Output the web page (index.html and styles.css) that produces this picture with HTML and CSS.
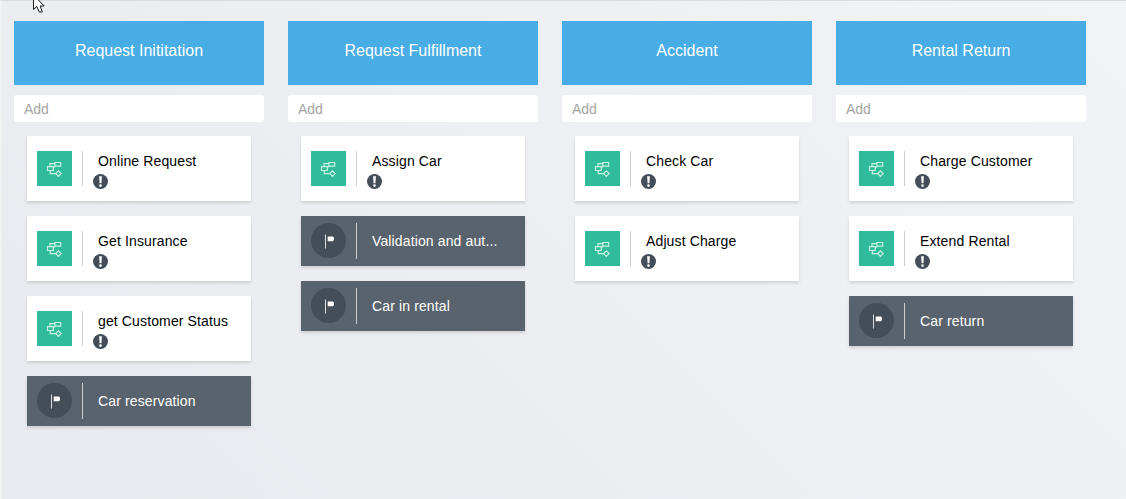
FILE: index.html
```html
<!DOCTYPE html>
<html lang="en">
<head>
<meta charset="utf-8">
<title>Case stages</title>
<link rel="stylesheet" href="styles.css">
</head>
<body>
<svg class="sprite" aria-hidden="true">
  <symbol id="flow" viewBox="0 0 35 35">
    <path d="M17.6 12.6H13V15.5M13.3 19.6V22.7H18.6M16.5 16.6L18 15.2M17.9 11.5H23.7V15.2H17.9ZM10.5 15.6H16.3V19.5H10.5ZM21.4 19.9L24.1 22.6L21.4 25.3L18.7 22.6Z" fill="none" stroke="#c9f2e5" stroke-width="1.2"/>
  </symbol>
  <symbol id="flag" viewBox="0 0 35 35">
    <circle cx="17.5" cy="17.5" r="17.5" fill="#434e59"/>
    <rect x="14" y="11.5" width="1" height="14" fill="#ddd"/>
    <path d="M16.7 13.5H22L23 14.5V16.8L22 18.3H16.7Z" fill="#fff"/>
  </symbol>
  <symbol id="alert" viewBox="0 0 15 15">
    <circle cx="7.5" cy="7.5" r="7.5" fill="#434e59"/>
    <path d="M6.1 2.2H8.9L8.4 9.3H6.6Z" fill="#fff"/>
    <circle cx="7.5" cy="11.6" r="1.3" fill="#fff"/>
  </symbol>
</svg>
<main class="board">
  <section class="stage">
    <h2 class="stage-title">Request Inititation</h2>
    <input class="add" placeholder="Add">
    <div class="cards">
      <div class="card"><svg class="icon task"><use href="#flow"/></svg><div class="body"><span class="name">Online Request</span><svg class="alert"><use href="#alert"/></svg></div></div>
      <div class="card"><svg class="icon task"><use href="#flow"/></svg><div class="body"><span class="name">Get Insurance</span><svg class="alert"><use href="#alert"/></svg></div></div>
      <div class="card"><svg class="icon task"><use href="#flow"/></svg><div class="body"><span class="name">get Customer Status</span><svg class="alert"><use href="#alert"/></svg></div></div>
      <div class="card milestone"><svg class="icon"><use href="#flag"/></svg><div class="body"><span class="name">Car reservation</span></div></div>
    </div>
  </section>
  <section class="stage">
    <h2 class="stage-title">Request Fulfillment</h2>
    <input class="add" placeholder="Add">
    <div class="cards">
      <div class="card"><svg class="icon task"><use href="#flow"/></svg><div class="body"><span class="name">Assign Car</span><svg class="alert"><use href="#alert"/></svg></div></div>
      <div class="card milestone"><svg class="icon"><use href="#flag"/></svg><div class="body"><span class="name">Validation and aut...</span></div></div>
      <div class="card milestone"><svg class="icon"><use href="#flag"/></svg><div class="body"><span class="name">Car in rental</span></div></div>
    </div>
  </section>
  <section class="stage">
    <h2 class="stage-title">Accident</h2>
    <input class="add" placeholder="Add">
    <div class="cards">
      <div class="card"><svg class="icon task"><use href="#flow"/></svg><div class="body"><span class="name">Check Car</span><svg class="alert"><use href="#alert"/></svg></div></div>
      <div class="card"><svg class="icon task"><use href="#flow"/></svg><div class="body"><span class="name">Adjust Charge</span><svg class="alert"><use href="#alert"/></svg></div></div>
    </div>
  </section>
  <section class="stage">
    <h2 class="stage-title">Rental Return</h2>
    <input class="add" placeholder="Add">
    <div class="cards">
      <div class="card"><svg class="icon task"><use href="#flow"/></svg><div class="body"><span class="name">Charge Customer</span><svg class="alert"><use href="#alert"/></svg></div></div>
      <div class="card"><svg class="icon task"><use href="#flow"/></svg><div class="body"><span class="name">Extend Rental</span><svg class="alert"><use href="#alert"/></svg></div></div>
      <div class="card milestone"><svg class="icon"><use href="#flag"/></svg><div class="body"><span class="name">Car return</span></div></div>
    </div>
  </section>
</main>
<svg class="cursor" viewBox="0 0 14 14"><path d="M.5 -5V9.5L3.8 6.5L6.3 12H9.3L7.2 6H11.2L.5 -5Z" fill="#fff" stroke="#15171f" stroke-width="1"/></svg>
</body>
</html>
```
FILE: styles.css
```css
* { box-sizing: border-box; }
body {
  margin: 0;
  height: 499px;
  overflow: hidden;
  font-family: "Liberation Sans", Arial, sans-serif;
  background: linear-gradient(45deg, #e9eaef, #f2f3f7);
  border-top: 1px solid #dadadc;
  border-left: 2px solid #f2f2f4;
}
.sprite { display: none; }
.board {
  display: flex;
  align-items: flex-start;
  gap: 24px;
  padding: 20px 0 0 12px;
}
.stage { flex: none; width: 250px; }
.stage-title {
  margin: 0;
  height: 64px;
  padding-top: 20px;
  background: #48ace5;
  color: #fff;
  font-size: 16px;
  font-weight: 400;
  line-height: 20px;
  text-align: center;
}
.add {
  display: block;
  width: 100%;
  height: 27px;
  margin: 10px 0 14px;
  padding: 1px 10px 0;
  border: 0;
  border-radius: 3px;
  background: #fff;
  font: 14px "Liberation Sans", Arial, sans-serif;
}
.add::placeholder { color: #a5a5a5; opacity: 1; }
.cards {
  display: flex;
  flex-direction: column;
  gap: 15px;
  padding: 0 13px;
}
.card {
  display: flex;
  align-items: center;
  height: 65px;
  padding-left: 10px;
  background: #fff;
  color: #000;
  box-shadow: 0 2px 3px rgba(0, 0, 0, .13);
}
.icon { width: 35px; height: 35px; flex: none; }
.task { background: #30bb9b; }
.body {
  height: 35px;
  margin-left: 10px;
  padding-left: 10px;
  border-left: 1px solid #ccc;
}
.name {
  display: block;
  padding-left: 5px;
  font-size: 14px;
  letter-spacing: .13px;
  line-height: 20px;
  white-space: nowrap;
}
.alert { display: block; width: 15px; height: 15px; margin-top: 3px; }
.milestone { height: 50px; background: #59636d; color: #fff; }
.milestone .icon { margin-bottom: 1px; }
.milestone .body { height: 36px; padding-top: 8px; }
.cursor {
  position: absolute;
  left: 33px;
  top: 0;
  width: 14px;
  height: 14px;
}
```
